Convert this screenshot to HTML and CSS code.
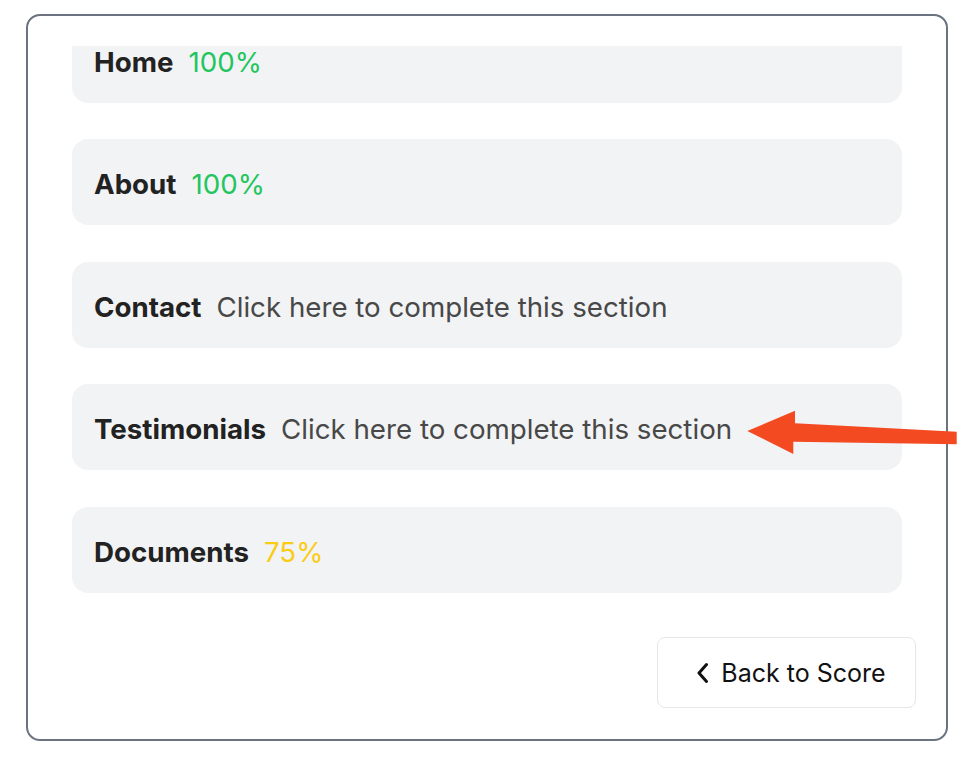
FILE: index.html
```html
<!DOCTYPE html>
<html lang="en">
<head>
<meta charset="utf-8">
<title>Sections</title>
<link rel="stylesheet" href="styles.css">
</head>
<body>
  <div class="frame">
    <div class="scroll">
      <ul class="sections">
        <li class="section"><span class="label">Home</span><span class="value good">100%</span></li>
        <li class="section"><span class="label">About</span><span class="value good">100%</span></li>
        <li class="section"><span class="label">Contact</span><span class="value todo">Click here to complete this section</span></li>
        <li class="section"><span class="label">Testimonials</span><span class="value todo">Click here to complete this section</span></li>
        <li class="section"><span class="label">Documents</span><span class="value partial">75%</span></li>
      </ul>
    </div>
    <div class="footer">
      <button class="back" type="button">
        <svg class="chev" width="12" height="22" viewBox="0 0 12 22" aria-hidden="true"><path d="M9.5 2.5 L2 11 L9.5 19.5" fill="none" stroke="#111" stroke-width="3" stroke-linecap="round" stroke-linejoin="round"/></svg>
        <span>Back to Score</span>
      </button>
    </div>
  </div>
  <svg class="arrow" width="228" height="64" viewBox="0 0 228 64" aria-hidden="true">
    <polygon points="7.3,31 55,10.7 55,23.3 216.7,31.7 216.7,44.3 53.3,41.7 53.3,54" fill="#f44a22"/>
  </svg>
</body>
</html>
```
FILE: styles.css
```css
html, body {
  margin: 0;
  padding: 0;
  background: #ffffff;
}
body {
  font-family: Inter, "Noto Sans", "Liberation Sans", sans-serif;
  width: 968px;
  height: 758px;
  position: relative;
  overflow: hidden;
}
.frame {
  box-sizing: border-box;
  margin: 14px 0 0 26px;
  width: 922px;
  height: 727px;
  border: 2px solid #6b7280;
  border-radius: 14px;
  padding: 30px;
  display: flex;
  flex-direction: column;
}
.scroll {
  height: 561px;
  overflow: hidden;
  padding: 0 14px;
  flex: none;
}
.sections {
  list-style: none;
  margin: -29px 0 0 0;
  padding: 0;
  display: flex;
  flex-direction: column;
  gap: 36.4px;
}
.section {
  box-sizing: border-box;
  height: 86px;
  background: #f2f3f5;
  border-radius: 16px;
  padding: 4px 22px 0;
  display: flex;
  align-items: center;
  gap: 15px;
  font-size: 27.7px;
  line-height: 34px;
}
.label {
  font-weight: 700;
  color: #222222;
}
.value {
  font-weight: 400;
}
.good { color: #22c55e; }
.partial { color: #facc15; }
.todo { color: #484848; }
.footer {
  margin-top: 30px;
  display: flex;
  justify-content: flex-end;
}
.back {
  box-sizing: border-box;
  width: 259px;
  height: 71px;
  background: #ffffff;
  border: 1px solid #e5e7eb;
  border-radius: 8px;
  display: flex;
  align-items: center;
  justify-content: center;
  gap: 12px;
  padding: 0 0 0 10px;
  font-family: Inter, "Noto Sans", "Liberation Sans", sans-serif;
  font-size: 25px;
  color: #111111;
  cursor: pointer;
}
.chev { flex: none; }
.arrow {
  position: absolute;
  left: 740px;
  top: 400px;
}
```
